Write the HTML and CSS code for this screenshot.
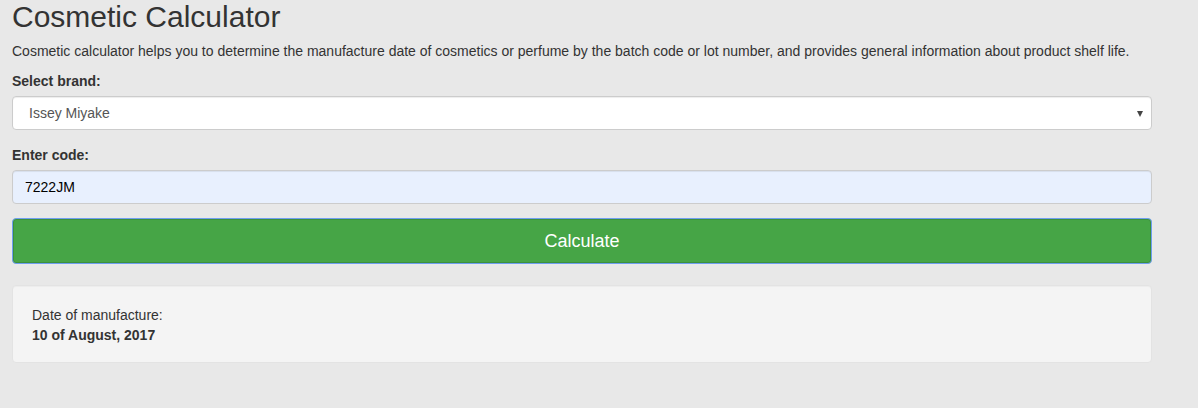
FILE: index.html
```html
<!DOCTYPE html>
<html>
<head>
<meta charset="utf-8">
<link rel="stylesheet" href="styles.css">
</head>
<body>
<div class="container">
  <h1 class="title">Cosmetic Calculator</h1>
  <p class="lead-text">Cosmetic calculator helps you to determine the manufacture date of cosmetics or perfume by the batch code or lot number, and provides general information about product shelf life.</p>
  <div class="form-group">
    <label class="label">Select brand:</label>
    <div class="select-box">
      <span class="select-value">Issey Miyake</span>
      <span class="select-arrow"></span>
    </div>
  </div>
  <div class="form-group">
    <label class="label">Enter code:</label>
    <div class="input-box">7222JM</div>
  </div>
  <div class="btn-calc">Calculate</div>
  <div class="well">
    <div>Date of manufacture:</div>
    <div class="bold">10 of August, 2017</div>
  </div>
</div>
</body>
</html>
```
FILE: styles.css
```css
html, body {
  margin: 0;
  padding: 0;
  background: #e8e8e8;
}
body {
  font-family: "Liberation Sans", Arial, sans-serif;
  font-size: 14px;
  line-height: 20px;
  color: #333;
}
.container {
  width: 1140px;
  padding-left: 12px;
}
.title {
  margin: 0 0 8px 0;
  font-size: 30px;
  line-height: 33px;
  font-weight: normal;
  color: #333;
}
.lead-text {
  margin: 0 0 10px 0;
}
.form-group {
  margin-bottom: 15px;
}
.label {
  display: block;
  font-weight: bold;
  margin-bottom: 5px;
}
.select-box {
  height: 34px;
  box-sizing: border-box;
  border: 1px solid #ccc;
  border-radius: 4px;
  background: #fff;
  display: flex;
  align-items: center;
  justify-content: space-between;
  padding: 0 8px 0 16px;
  color: #555;
  box-shadow: inset 0 1px 1px rgba(0,0,0,0.075);
}
.select-arrow {
  width: 0;
  height: 0;
  border-left: 3px solid transparent;
  border-right: 3px solid transparent;
  border-top: 6px solid #444;
  margin-top: 1px;
}
.input-box {
  height: 34px;
  box-sizing: border-box;
  border: 1px solid #ccc;
  border-radius: 4px;
  background: #e8f0fe;
  display: flex;
  align-items: center;
  padding: 0 12px;
  color: #000;
  box-shadow: inset 0 1px 1px rgba(0,0,0,0.075);
}
.btn-calc {
  height: 46px;
  box-sizing: border-box;
  border: 1px solid #6e9ef0;
  border-radius: 4px;
  background: #46a546;
  color: #fff;
  font-size: 18px;
  display: flex;
  align-items: center;
  justify-content: center;
  margin-top: -1px;
  box-shadow: inset 0 0 0 1px #3d8f3d;
}
.well {
  margin-top: 21px;
  background: #f4f4f4;
  border: 1px solid #e3e3e3;
  border-radius: 4px;
  padding: 19px 19px 17px 19px;
  box-shadow: inset 0 1px 1px rgba(0,0,0,0.03);
}
.bold {
  font-weight: bold;
}
```
